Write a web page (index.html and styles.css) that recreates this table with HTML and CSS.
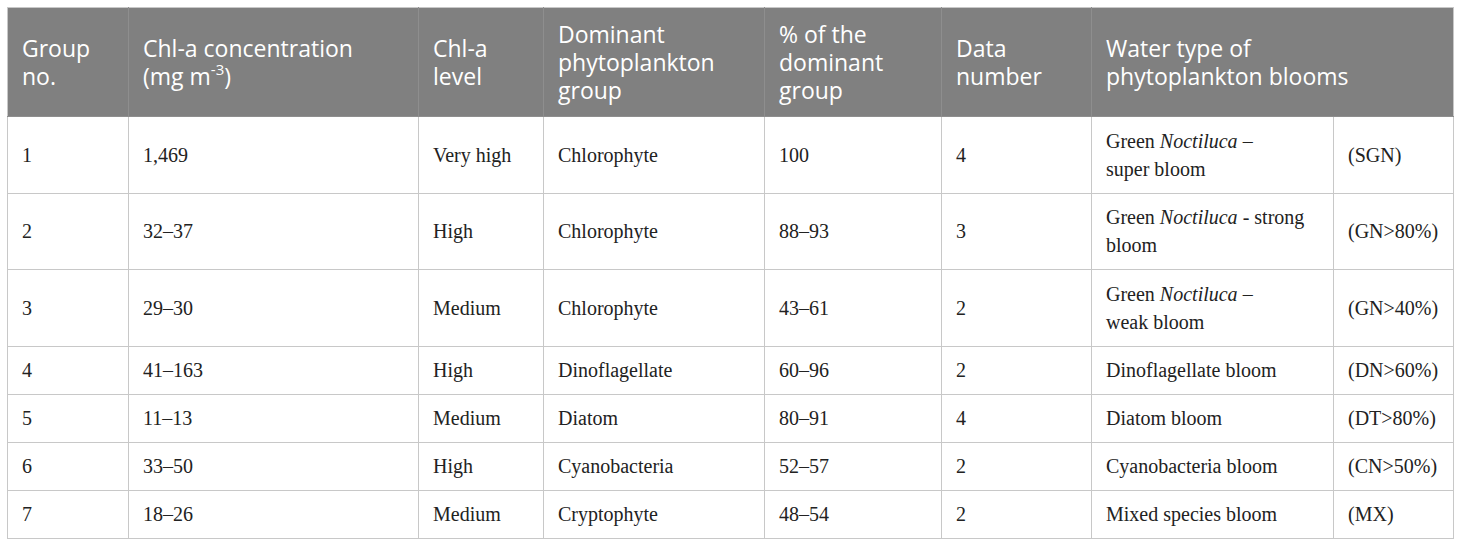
FILE: index.html
```html
<!DOCTYPE html>
<html>
<head>
<meta charset="utf-8">
<link rel="stylesheet" href="styles.css">
</head>
<body>
<table class="data">
  <colgroup>
    <col class="c1"><col class="c2"><col class="c3"><col class="c4"><col class="c5"><col class="c6"><col class="c7"><col class="c8">
  </colgroup>
  <thead>
    <tr>
      <th>Group<br>no.</th>
      <th>Chl-a concentration<br>(mg m<sup>-3</sup>)</th>
      <th>Chl-a<br>level</th>
      <th>Dominant<br>phytoplankton<br>group</th>
      <th>% of the<br>dominant<br>group</th>
      <th>Data<br>number</th>
      <th colspan="2">Water type of<br>phytoplankton blooms</th>
    </tr>
  </thead>
  <tbody>
    <tr class="tall"><td>1</td><td>1,469</td><td>Very high</td><td>Chlorophyte</td><td>100</td><td>4</td><td>Green <i>Noctiluca</i> –<br>super bloom</td><td>(SGN)</td></tr>
    <tr class="tall"><td>2</td><td>32–37</td><td>High</td><td>Chlorophyte</td><td>88–93</td><td>3</td><td>Green <i>Noctiluca</i> - strong<br>bloom</td><td>(GN&gt;80%)</td></tr>
    <tr class="tall"><td>3</td><td>29–30</td><td>Medium</td><td>Chlorophyte</td><td>43–61</td><td>2</td><td>Green <i>Noctiluca</i> –<br>weak bloom</td><td>(GN&gt;40%)</td></tr>
    <tr><td>4</td><td>41–163</td><td>High</td><td>Dinoflagellate</td><td>60–96</td><td>2</td><td>Dinoflagellate bloom</td><td>(DN&gt;60%)</td></tr>
    <tr><td>5</td><td>11–13</td><td>Medium</td><td>Diatom</td><td>80–91</td><td>4</td><td>Diatom bloom</td><td>(DT&gt;80%)</td></tr>
    <tr><td>6</td><td>33–50</td><td>High</td><td>Cyanobacteria</td><td>52–57</td><td>2</td><td>Cyanobacteria bloom</td><td>(CN&gt;50%)</td></tr>
    <tr><td>7</td><td>18–26</td><td>Medium</td><td>Cryptophyte</td><td>48–54</td><td>2</td><td>Mixed species bloom</td><td>(MX)</td></tr>
  </tbody>
</table>
</body>
</html>
```

FILE: styles.css
```css
html, body {
  margin: 0;
  background: #ffffff;
}
body {
  padding: 7px;
}
.data {
  border-collapse: collapse;
  table-layout: fixed;
  width: 1446px;
  border: 1px solid #c8c8c8;
}
.c1 { width: 121px; }
.c2 { width: 290px; }
.c3 { width: 125px; }
.c4 { width: 221px; }
.c5 { width: 177px; }
.c6 { width: 150px; }
.c7 { width: 242px; }
.c8 { width: 120px; }

.data th {
  background: #808080;
  color: #ffffff;
  font-family: "Open Sans", "Liberation Sans", sans-serif;
  font-weight: 400;
  font-size: 23px;
  line-height: 28px;
  text-align: left;
  vertical-align: middle;
  height: 109px;
  box-sizing: border-box;
  padding: 0 14px;
  border: 1px solid #8e8e8e;
  border-top-color: #c8c8c8;
}
.data th:first-child { border-left-color: #c8c8c8; }
.data th:last-child { border-right-color: #c8c8c8; }
.data sup {
  font-size: 15px;
  line-height: 0;
  vertical-align: 10px;
}
.data td {
  font-family: "Liberation Serif", "Times New Roman", serif;
  font-size: 20px;
  line-height: 28px;
  color: #222222;
  text-align: left;
  vertical-align: middle;
  padding: 9px 14px;
  border: 1px solid #c8c8c8;
  height: 48px;
  box-sizing: border-box;
}
.data tr.tall td {
  height: 76.5px;
}
```
